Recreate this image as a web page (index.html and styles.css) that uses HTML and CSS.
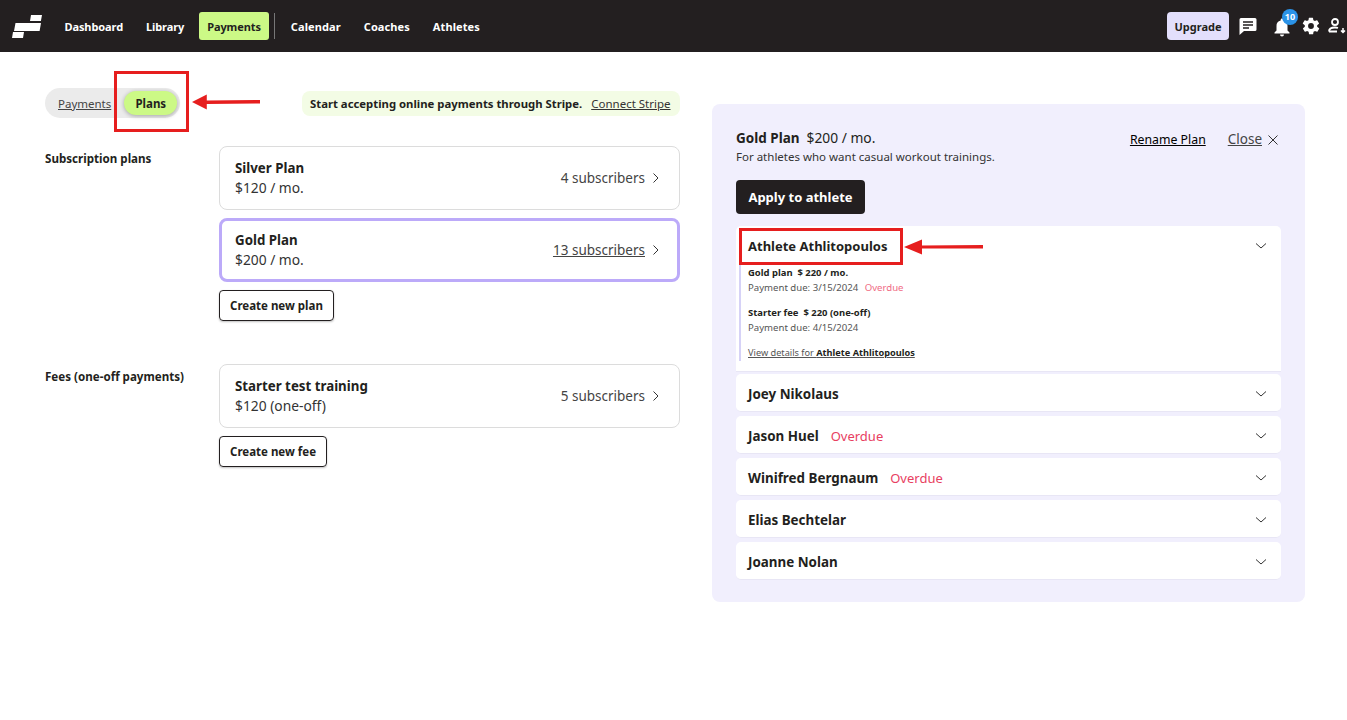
FILE: index.html
```html
<!DOCTYPE html>
<html lang="en">
<head>
<meta charset="utf-8">
<title>Payments - Plans</title>
<link rel="stylesheet" href="styles.css">
</head>
<body>
<header class="topbar">
  <svg class="logo" viewBox="0 0 30 24" width="30" height="24"><path d="M19 1h11l-1.100 6H18zM3.500 9H29l-1.400 8H2zM1 18h11l-1 6H0z" fill="#fff"/></svg>
  <nav class="nav">
    <a class="nav-item">Dashboard</a>
    <a class="nav-item">Library</a>
    <a class="nav-item nav-active">Payments</a>
    <span class="nav-divider"></span>
    <a class="nav-item">Calendar</a>
    <a class="nav-item">Coaches</a>
    <a class="nav-item">Athletes</a>
  </nav>
  <div class="top-actions">
    <a class="upgrade">Upgrade</a>
    <svg class="ico-chat" viewBox="0 0 18 18" width="18" height="18"><path fill="#fff" d="M2 1h14a1.500 1.500 0 0 1 1.500 1.500v10A1.500 1.500 0 0 1 16 14H5l-4.500 4V2.500A1.500 1.500 0 0 1 2 1z"/><path stroke="#231f20" stroke-width="1.500" d="M4 5h10M4 8h10M4 11h6"/></svg>
    <span class="bell">
      <svg viewBox="0 0 18 20" width="18" height="20"><path fill="#fff" d="M9 1.500a1.300 1.300 0 0 1 1.300 1.300v.6A5.500 5.500 0 0 1 14.500 9v4.500l2 2V16.500H1.500V15.500l2-2V9a5.500 5.500 0 0 1 4.200-5.600v-.6A1.300 1.300 0 0 1 9 1.500zM7 17.500h4a2 2 0 0 1-4 0z"/></svg>
      <span class="badge">10</span>
    </span>
    <svg class="ico-gear" viewBox="0 0 24 24" width="20" height="20"><path fill="#fff" d="M19.400 13a7.500 7.500 0 0 0 0-2l2.100-1.600a.5.500 0 0 0 .1-.6l-2-3.500a.5.500 0 0 0-.6-.2l-2.500 1a7.300 7.300 0 0 0-1.700-1l-.4-2.600a.5.500 0 0 0-.5-.5h-4a.5.500 0 0 0-.5.400l-.4 2.700a7.600 7.600 0 0 0-1.700 1l-2.500-1a.5.500 0 0 0-.6.200l-2 3.500a.5.500 0 0 0 .1.600L4.600 11a7.500 7.500 0 0 0 0 2l-2.100 1.600a.5.500 0 0 0-.1.600l2 3.500c.1.200.4.300.6.200l2.500-1c.5.400 1.100.7 1.700 1l.4 2.600c0 .3.200.5.500.5h4c.3 0 .5-.2.500-.4l.4-2.700c.6-.3 1.200-.6 1.700-1l2.500 1c.2.100.5 0 .6-.2l2-3.500a.5.500 0 0 0-.1-.6zM12 15.500a3.500 3.500 0 1 1 0-7 3.500 3.500 0 0 1 0 7z"/></svg>
    <svg class="ico-user" viewBox="0 0 18 18" width="18" height="18"><circle cx="7" cy="5" r="3" fill="none" stroke="#fff" stroke-width="1.800"/><path fill="none" stroke="#fff" stroke-width="1.800" d="M1 14.500c0-3 3-4 6-4 1 0 2 .1 3 .5M1 14.500h8"/><path fill="none" stroke="#fff" stroke-width="1.500" d="M15 11v4M13 13.500l2 2 2-2"/></svg>
  </div>
</header>

<main class="page">
  <section class="left">
    <div class="left-top">
      <div class="toggle">
        <a class="toggle-link">Payments</a>
        <a class="toggle-active">Plans</a>
      </div>
      <div class="stripe">
        <strong>Start accepting online payments through Stripe.</strong>
        <a class="stripe-link">Connect Stripe</a>
      </div>
    </div>

    <div class="group group-plans">
      <h2 class="group-label">Subscription plans</h2>
      <div class="group-body">
        <div class="plan">
          <div class="plan-info"><div class="plan-name">Silver Plan</div><div class="plan-price">$120 / mo.</div></div>
          <div class="plan-subs"><span>4 subscribers</span><svg class="chev-r" viewBox="0 0 8 12" width="8" height="12"><path d="M1.500 1.500 6 6l-4.500 4.500" fill="none" stroke="#333" stroke-width="1"/></svg></div>
        </div>
        <div class="plan plan-selected">
          <div class="plan-info"><div class="plan-name">Gold Plan</div><div class="plan-price">$200 / mo.</div></div>
          <div class="plan-subs"><span class="underlined">13 subscribers</span><svg class="chev-r" viewBox="0 0 8 12" width="8" height="12"><path d="M1.500 1.500 6 6l-4.500 4.500" fill="none" stroke="#333" stroke-width="1"/></svg></div>
        </div>
        <a class="btn-outline">Create new plan</a>
      </div>
    </div>

    <div class="group group-fees">
      <h2 class="group-label">Fees (one-off payments)</h2>
      <div class="group-body">
        <div class="plan">
          <div class="plan-info"><div class="plan-name">Starter test training</div><div class="plan-price">$120 (one-off)</div></div>
          <div class="plan-subs"><span>5 subscribers</span><svg class="chev-r" viewBox="0 0 8 12" width="8" height="12"><path d="M1.500 1.500 6 6l-4.500 4.500" fill="none" stroke="#333" stroke-width="1"/></svg></div>
        </div>
        <a class="btn-outline">Create new fee</a>
      </div>
    </div>
  </section>

  <aside class="panel">
    <div class="panel-head">
      <div>
        <div class="panel-title"><strong>Gold Plan</strong><span class="panel-price">$200 / mo.</span></div>
        <div class="panel-sub">For athletes who want casual workout trainings.</div>
      </div>
      <div class="panel-links">
        <a class="rename">Rename Plan</a>
        <a class="close">Close</a>
        <svg viewBox="0 0 12 12" width="12" height="12" class="close-x"><path d="M1.500 1.500l9 9M10.500 1.500l-9 9" stroke="#333" stroke-width="1"/></svg>
      </div>
    </div>
    <a class="btn-dark">Apply to athlete</a>
    <div class="accordion">
      <div class="acc acc-open">
        <div class="acc-head"><span class="acc-name">Athlete Athlitopoulos</span>
          <svg class="chev-d" viewBox="0 0 12 8" width="12" height="8"><path d="M1 1.500 6 6l5-4.500" fill="none" stroke="#333" stroke-width="1"/></svg></div>
        <div class="acc-body">
          <div class="acc-line-strong">Gold plan&nbsp; $ 220 / mo.</div>
          <div class="acc-line">Payment due: 3/15/2024 <span class="overdue-sm">Overdue</span></div>
          <div class="acc-line-strong acc-gap">Starter fee&nbsp; $ 220 (one-off)</div>
          <div class="acc-line">Payment due: 4/15/2024</div>
          <a class="acc-details">View details for <strong>Athlete Athlitopoulos</strong></a>
        </div>
      </div>
      <div class="acc"><div class="acc-head"><span class="acc-name">Joey Nikolaus</span><svg class="chev-d" viewBox="0 0 12 8" width="12" height="8"><path d="M1 1.500 6 6l5-4.500" fill="none" stroke="#333" stroke-width="1"/></svg></div></div>
      <div class="acc"><div class="acc-head"><span class="acc-name">Jason Huel</span><span class="overdue">Overdue</span><svg class="chev-d" viewBox="0 0 12 8" width="12" height="8"><path d="M1 1.500 6 6l5-4.500" fill="none" stroke="#333" stroke-width="1"/></svg></div></div>
      <div class="acc"><div class="acc-head"><span class="acc-name">Winifred Bergnaum</span><span class="overdue">Overdue</span><svg class="chev-d" viewBox="0 0 12 8" width="12" height="8"><path d="M1 1.500 6 6l5-4.500" fill="none" stroke="#333" stroke-width="1"/></svg></div></div>
      <div class="acc"><div class="acc-head"><span class="acc-name">Elias Bechtelar</span><svg class="chev-d" viewBox="0 0 12 8" width="12" height="8"><path d="M1 1.500 6 6l5-4.500" fill="none" stroke="#333" stroke-width="1"/></svg></div></div>
      <div class="acc"><div class="acc-head"><span class="acc-name">Joanne Nolan</span><svg class="chev-d" viewBox="0 0 12 8" width="12" height="8"><path d="M1 1.500 6 6l5-4.500" fill="none" stroke="#333" stroke-width="1"/></svg></div></div>
    </div>
  </aside>
</main>

<div class="mark mark-plans"></div>
<div class="mark mark-athlete"></div>
<svg class="arrow arrow-plans" viewBox="0 0 69 18" width="68" height="18"><path d="M0 9 15 1.500V7.500L69 7v3.500L15 11v5.500z" fill="#e61e1e"/></svg>
<svg class="arrow arrow-athlete" viewBox="0 0 79 18" width="79" height="18"><path d="M0 9 18 1.500V7.500L79 7v3.500L18 10.500v6z" fill="#e61e1e"/></svg>
</body>
</html>
```
FILE: styles.css
```css
* { box-sizing: border-box; }
html, body { margin: 0; height: 720px; overflow: hidden; }
body { font-family: "Noto Sans", "Roboto", sans-serif; color: #231f20; background: #fff; }
a { color: inherit; }
h2 { margin: 0; }

.topbar { height: 52px; background: #231f20; display: flex; align-items: center; padding-left: 12px; overflow: hidden; }
.logo { flex: none; margin-right: 13px; }
.nav { display: flex; align-items: center; }
.nav-item { font-size: 11px; letter-spacing: -0.1px; font-weight: 700; color: #fff; padding: 0 9.500px; height: 28px; line-height: 29px; margin-right: 4px; border-radius: 3px; white-space: nowrap; }
.nav-active { background: #ccf986; color: #231f20; padding: 0 8.500px; margin-left: 1px; margin-right: 0; }
.nav-divider { width: 1px; height: 26px; background: #777; margin: 0 6px 0 5px; }
.nav-divider ~ .nav-item { letter-spacing: 0.1px; }
.top-actions { margin-left: auto; display: flex; align-items: center; flex: none; width: 180px; }
.top-actions > * { flex: none; }
.upgrade { width: 62px; height: 28px; line-height: 29px; text-align: center; background: #e3dffc; border-radius: 4px; font-size: 11px; font-weight: 700; color: #231f20; margin-right: 10px; }
.ico-chat { margin-right: 16px; }
.bell { position: relative; display: block; width: 18px; height: 20px; margin: 2px 10px 0 0; }
.badge { position: absolute; left: 9px; top: -8px; width: 16px; height: 16px; border-radius: 50%; background: #2b93e8; color: #fff; font-size: 9px; font-weight: 700; line-height: 16px; text-align: center; }
.ico-gear { margin-right: 7px; }

.page { display: flex; align-items: flex-start; padding: 36px 42px 0 45px; gap: 32px; }
.left { width: 635px; flex: none; }
.left-top { display: flex; justify-content: space-between; align-items: center; height: 30px; }
.toggle { display: flex; align-items: center; width: 135px; height: 30px; background: #ebebeb; border-radius: 15px; padding-left: 13px; font-size: 11.500px; }
.toggle-link { text-decoration: underline; color: #444; margin-right: 13px; }
.toggle-active { width: 53px; height: 24px; line-height: 26px; text-align: center; font-weight: 700; font-size: 11.500px; background: #ccf986; border-radius: 12px; box-shadow: 0 1px 4px rgba(0,0,0,.3); }
.stripe { display: flex; align-items: center; height: 25px; width: 378px; background: #f3fce5; border-radius: 8px; padding-left: 8px; font-size: 11.500px; white-space: nowrap; }
.stripe strong { font-size: 11.330px; font-weight: 700; margin-right: 9px; }
.stripe-link { text-decoration: underline; color: #333; }

.group { display: flex; }
.group-plans { margin-top: 28px; }
.group-fees { margin-top: 43px; }
.group-label { width: 174px; flex: none; font-size: 11.600px; font-weight: 700; padding-top: 5px; line-height: 16px; }
.group-body { flex: 1; display: flex; flex-direction: column; align-items: flex-start; gap: 8px; }
.plan { width: 100%; height: 64px; border: 1px solid #dcdcdc; border-radius: 8px; display: flex; justify-content: space-between; align-items: center; padding: 0 19px 0 15px; }
.plan-selected { border: 3px solid #bcaaf9; padding: 0 17px 0 13px; }
.plan-name { font-size: 13.300px; font-weight: 700; line-height: 20px; }
.plan-price { font-size: 13.800px; line-height: 20px; color: #333; }
.plan-subs { display: flex; align-items: center; gap: 7px; font-size: 13.500px; color: #444; }
.underlined { text-decoration: underline; }
.btn-outline { display: block; height: 31px; line-height: 29px; padding: 0 10px; border: 1px solid #231f20; border-radius: 4px; font-size: 11.500px; font-weight: 700; box-shadow: 0 1px 2px rgba(0,0,0,.25); white-space: nowrap; }

.panel { width: 593px; flex: none; margin-top: 16px; height: 498px; padding: 24px 24px 22px; background: #f1effd; border-radius: 8px; }
.panel-head { display: flex; justify-content: space-between; align-items: flex-start; }
.panel-title { font-size: 13.500px; line-height: 20px; }
.panel-title strong { font-weight: 700; }
.panel-price { margin-left: 7px; font-size: 13.800px; }
.panel-sub { font-size: 11.500px; line-height: 18px; color: #333; }
.panel-links { display: flex; align-items: center; font-size: 12.300px; height: 22px; padding-right: 2px; }
.rename { text-decoration: underline; color: #000; margin-right: 22px; }
.close { text-decoration: underline; color: #444; font-size: 13.500px; margin-right: 5px; }
.close-x { margin-top: 2px; }
.btn-dark { display: block; width: 129px; height: 34px; line-height: 34px; text-align: center; margin-top: 14px; background: #231f20; color: #fff; font-size: 13px; font-weight: 700; border-radius: 4px; }
.accordion { margin-top: 12px; display: flex; flex-direction: column; gap: 4px; }
.acc { background: #fff; border-radius: 5px; border-bottom: 1px solid #e8e6f5; }
.acc-open { border-radius: 5px 5px 0 0; margin-bottom: -2px; padding-bottom: 10px; }
.acc-head { display: flex; align-items: center; height: 37px; padding: 3px 14px 0 12px; }
.acc-name { font-size: 13.400px; font-weight: 700; }
.acc-open .acc-name { font-size: 13px; }
.overdue { font-size: 13px; color: #e8405f; margin-left: 12px; }
.chev-d { margin-left: auto; }
.acc-body { margin-left: 3px; height: 98px; padding: 3px 0 0 7px; border-left: 2px solid #d6d2f7; color: #555; }
.acc-line-strong { font-size: 9.450px; font-weight: 700; color: #231f20; line-height: 14px; }
.acc-line { font-size: 9.600px; line-height: 14px; margin-top: 1px; }
.acc-gap { margin-top: 11px; }
.overdue-sm { color: #f06a84; margin-left: 4px; }
.acc-details { display: block; margin-top: 11px; text-decoration: underline; font-size: 9.200px; line-height: 14px; }
.acc-details strong { color: #231f20; font-weight: 700; }

.mark { position: absolute; border: 3px solid #e61e1e; }
.mark-plans { left: 114px; top: 71px; width: 75px; height: 61px; }
.mark-athlete { left: 739px; top: 228px; width: 164px; height: 37px; }
.arrow { position: absolute; }
.arrow-plans { left: 192px; top: 93px; }
.arrow-athlete { left: 904px; top: 238px; }
```
